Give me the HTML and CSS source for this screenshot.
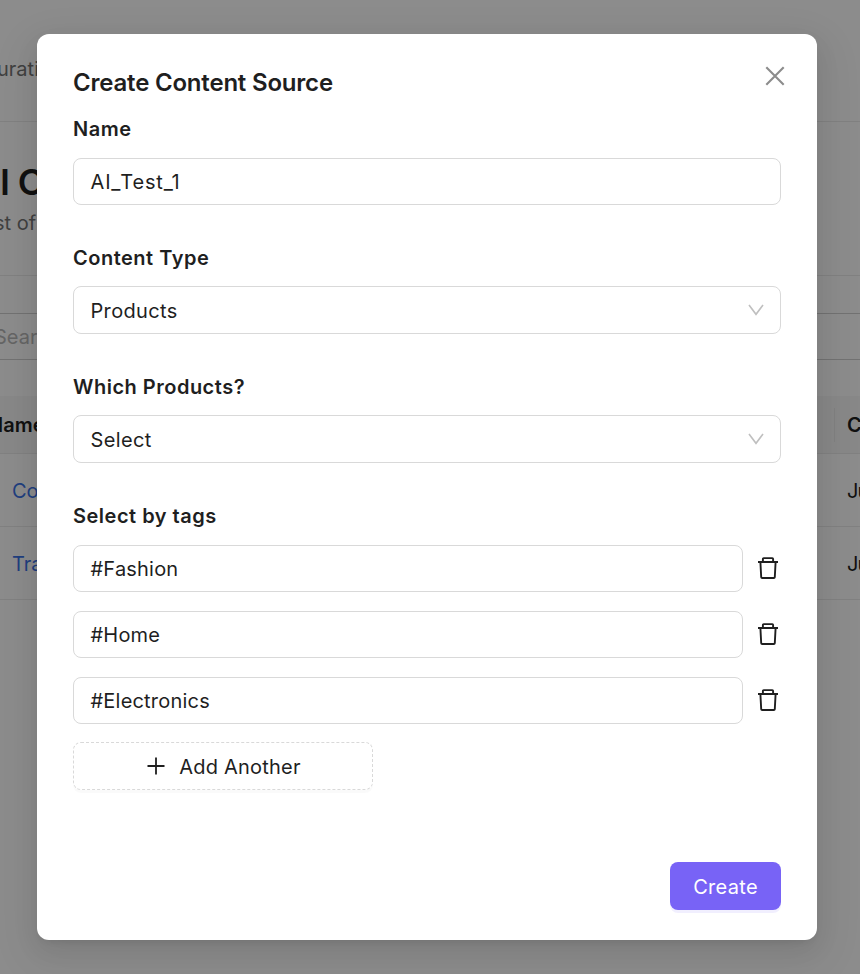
FILE: index.html
```html
<!DOCTYPE html>
<html lang="en">
<head>
<meta charset="utf-8">
<title>Create Content Source</title>
<link rel="stylesheet" href="styles.css">
</head>
<body>
<div class="page">
  <header class="topbar"><span>urati</span></header>
  <section class="intro">
    <h1>I C</h1>
    <p>st of</p>
  </section>
  <div class="search"><span>Sear</span></div>
  <div class="table">
    <div class="row head"><span class="name">Name</span><span class="created">C</span></div>
    <div class="row"><a class="name">Co</a><span class="created">Ju</span></div>
    <div class="row"><a class="name">Tra</a><span class="created">Ju</span></div>
  </div>
</div>
<div class="mask">
  <div class="modal">
    <svg class="close" viewBox="0 0 20 20"><path d="M1.3 1.3 18.7 18.7M18.7 1.3 1.3 18.7"/></svg>
    <h2 class="title"><span>Create Content Source</span></h2>
    <div class="field">
      <div class="label"><span>Name</span></div>
      <div class="input"><span class="wide">AI_Test_1</span></div>
    </div>
    <div class="field">
      <div class="label"><span>Content Type</span></div>
      <div class="input select"><span>Products</span><svg class="chevron" viewBox="0 0 16 12"><path d="M1 1 8 10.3 15 1"/></svg></div>
    </div>
    <div class="field">
      <div class="label"><span>Which Products?</span></div>
      <div class="input select"><span>Select</span><svg class="chevron" viewBox="0 0 16 12"><path d="M1 1 8 10.3 15 1"/></svg></div>
    </div>
    <div class="field tags">
      <div class="label"><span>Select by tags</span></div>
      <div class="tag"><div class="input"><span>#Fashion</span></div><svg class="trash" viewBox="0 0 22 24"><path d="M1 6H21M5.9 6V2.9Q5.9 2.1 6.7 2.1H15.3Q16.1 2.1 16.1 2.9V6M3.4 6 4.2 21.2Q4.3 22 5.1 22H16.9Q17.7 22 17.8 21.2L18.6 6"/></svg></div>
      <div class="tag"><div class="input"><span>#Home</span></div><svg class="trash" viewBox="0 0 22 24"><path d="M1 6H21M5.9 6V2.9Q5.9 2.1 6.7 2.1H15.3Q16.1 2.1 16.1 2.9V6M3.4 6 4.2 21.2Q4.3 22 5.1 22H16.9Q17.7 22 17.8 21.2L18.6 6"/></svg></div>
      <div class="tag"><div class="input"><span>#Electronics</span></div><svg class="trash" viewBox="0 0 22 24"><path d="M1 6H21M5.9 6V2.9Q5.9 2.1 6.7 2.1H15.3Q16.1 2.1 16.1 2.9V6M3.4 6 4.2 21.2Q4.3 22 5.1 22H16.9Q17.7 22 17.8 21.2L18.6 6"/></svg></div>
    </div>
    <div class="add"><svg class="plus" viewBox="0 0 18 18"><path d="M9 .5V17.5M.5 9H17.5"/></svg><span>Add Another</span></div>
    <div class="footer"><div class="create"><span>Create</span></div></div>
  </div>
</div>
</body>
</html>
```
FILE: styles.css
```css
* { box-sizing: border-box; }
body {
  margin: 0;
  width: 860px;
  height: 974px;
  overflow: hidden;
  background: #fff;
  color: #1f1f1f;
  font: 400 20px/30px Inter, "Liberation Sans", sans-serif;
  letter-spacing: .2px;
}
h1, h2, p { margin: 0; }
span, a { white-space: nowrap; }
svg { fill: none; flex: none; }

/* page behind the dialog */
.page { height: 974px; overflow: hidden; letter-spacing: 0; }
.topbar {
  height: 122px;
  padding-top: 54px;
  border-bottom: 1px solid #ececec;
  color: #757575;
}
.topbar span { margin-left: -3px; }
.intro {
  height: 154px;
  padding-top: 37px;
  border-bottom: 1px solid #ececec;
}
.intro h1 {
  font-size: 36px;
  line-height: 46px;
  font-weight: 600;
  letter-spacing: -.6px;
}
.intro p { margin: 3px 0 0 -6px; color: #757575; }
.search {
  height: 47px;
  margin-top: 37px;
  padding-top: 8px;
  border: solid #cfcfcf;
  border-width: 1px 0;
  color: #b8b8b8;
}
.search span { margin-left: -6px; }
.table { margin-top: 36px; }
.row {
  display: flex;
  align-items: center;
  justify-content: space-between;
  height: 73px;
  padding: 2px 0 0 12px;
  border-bottom: 1px solid #ececec;
}
.row a { color: #3b73e8; }
.row .created {
  width: 26px;
  padding-left: 13px;
  line-height: 34px;
  letter-spacing: -1px;
}
.row.head {
  height: 58px;
  padding: 0;
  background: #f7f7f7;
  font-weight: 600;
}
.head .name { margin-left: -12px; }
.head .created { padding-left: 12px; border-left: 1px solid #ebebeb; }

/* dialog */
.mask {
  position: absolute;
  inset: 0;
  overflow: hidden;
  padding: 34px 0 0 37px;
  background: rgba(0, 0, 0, .45);
}
.modal {
  position: relative;
  width: 780px;
  height: 906px;
  padding: 30px 36px;
  border-radius: 12px;
  background: #fff;
  box-shadow: 0 9px 24px rgba(0, 0, 0, .08), 0 5px 9px -6px rgba(0, 0, 0, .12), 0 14px 42px 12px rgba(0, 0, 0, .05);
}
.close {
  position: absolute;
  top: 32px;
  right: 32px;
  width: 20px;
  height: 20px;
  stroke: #8c8c8c;
  stroke-width: 2.1;
}
.title {
  height: 36px;
  font-size: 24px;
  line-height: 37px;
  font-weight: 600;
  letter-spacing: -.2px;
}
.field { height: 129px; padding-top: 13px; }
.label {
  height: 45px;
  font-weight: 600;
  line-height: 32px;
  letter-spacing: .5px;
}
.input {
  display: flex;
  align-items: center;
  justify-content: space-between;
  height: 47px;
  padding: 0 16px 0 16.5px;
  border: 1px solid #d9d9d9;
  border-radius: 8px;
}
.input .wide { letter-spacing: .85px; }
.select { height: 48px; margin-top: -1px; }
.select span { line-height: 32px; padding-top: 1px; letter-spacing: .35px; }
.chevron {
  width: 16px;
  height: 12px;
  stroke: #bfbfbf;
  stroke-width: 1.6;
}
.tags { height: 256px; }
.tag {
  display: flex;
  align-items: center;
  gap: 14px;
  margin-bottom: 19px;
}
.tag .input { width: 670px; }
.trash {
  width: 22px;
  height: 24px;
  margin-bottom: 2px;
  stroke: #1f1f1f;
  stroke-width: 1.9;
}
.add {
  display: flex;
  align-items: center;
  justify-content: center;
  gap: 14px;
  width: 300px;
  height: 48px;
  margin-top: -1px;
  padding-left: 2px;
  border: 1px dashed #d9d9d9;
  border-radius: 8px;
  box-shadow: 0 3px 0 rgba(0, 0, 0, .02);
}
.add span { padding-top: 1px; }
.plus {
  width: 18px;
  height: 18px;
  stroke: #1f1f1f;
  stroke-width: 1.8;
}
.footer {
  display: flex;
  justify-content: flex-end;
  margin-top: 72px;
}
.create {
  width: 111px;
  height: 48px;
  border-radius: 8px;
  background: #7863f6;
  box-shadow: 0 3px 0 rgba(120, 99, 246, .1);
  color: #fff;
  line-height: 50px;
  letter-spacing: .3px;
  text-align: center;
}
```
